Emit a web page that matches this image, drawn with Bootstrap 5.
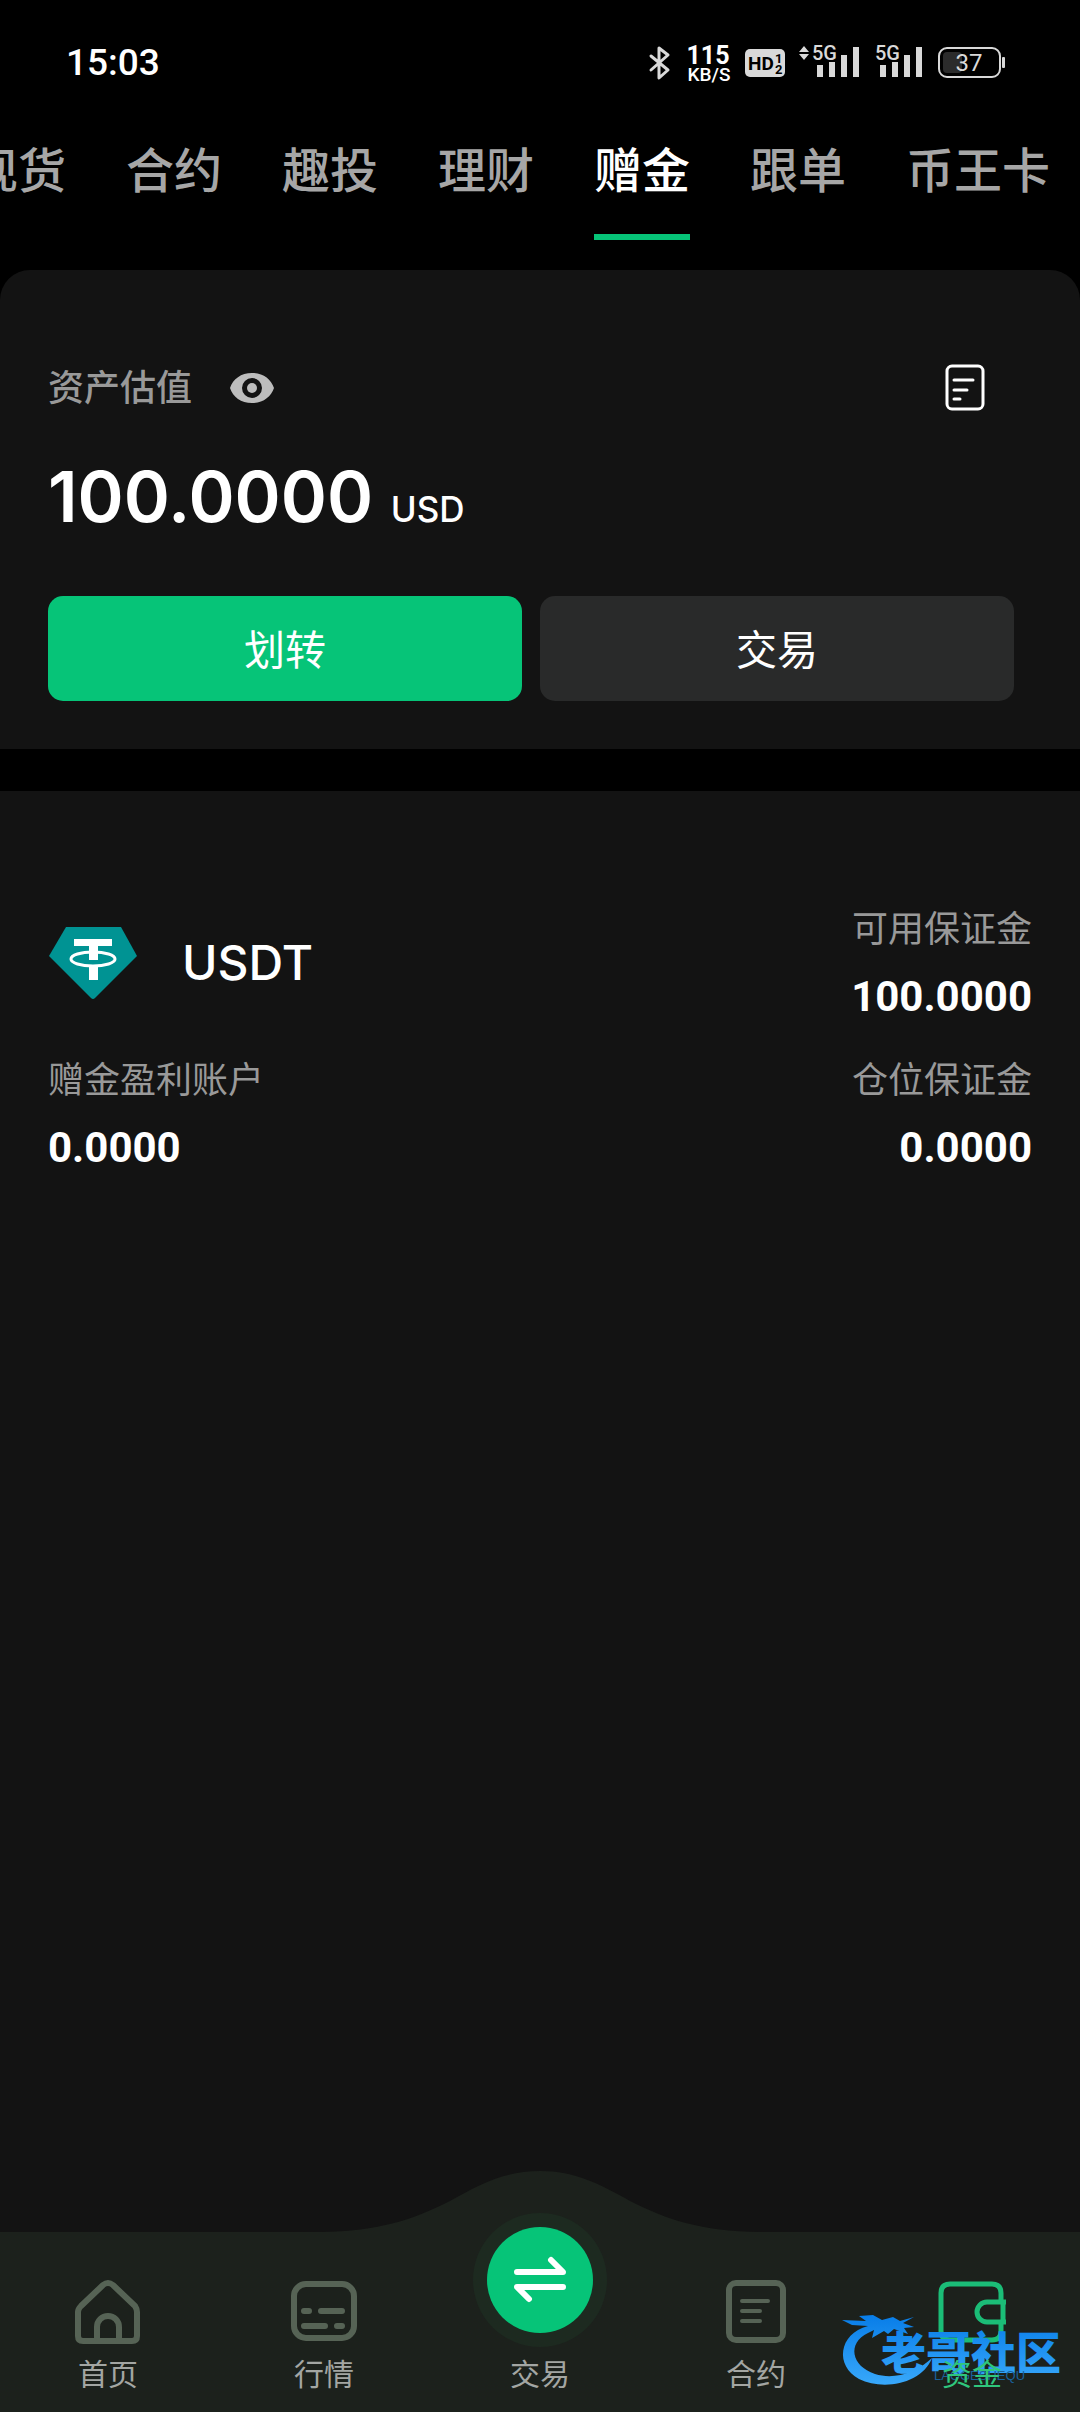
<!DOCTYPE html>
<html lang="zh-CN" data-bs-theme="dark">
<head>
<meta charset="utf-8">
<meta name="viewport" content="width=device-width, initial-scale=1">
<title>资金</title>
<link rel="stylesheet" href="https://cdn.jsdelivr.net/npm/bootstrap@5.3.0/dist/css/bootstrap.min.css">
<style>
:root{--brand:#06c478;--panel:#131313;--bar:#1c211c;--dim:#999}
body{background:#000;color:#fff;font-family:Inter,"Noto Sans CJK SC",sans-serif;line-height:1}
svg{display:block;flex:none}
.status-bar{height:126px;padding:0 75px 0 66px}
.clock{font:500 37px/40px Roboto,sans-serif}
.status-icons text{font-family:Roboto,sans-serif}
.tab-strip{height:144px;gap:60px;margin-left:-30px}
.tab-strip .nav-link{padding:17px 0 0;height:114px;font-size:48px;line-height:56px;font-weight:500;color:#a6a6a6;border-bottom:6px solid transparent;border-radius:0}
.tab-strip .nav-link.active{color:#fff;border-color:var(--brand)}
.panel{background:var(--panel)}
.summary{border-radius:30px 30px 0 0;padding:92px 66px 48px 48px;margin-bottom:42px}
.caption{font-size:36px;line-height:52px;color:var(--dim)}
.icon-btn{background:none;border:0;padding:0;color:#bdbdbd}
.eye-btn{margin-left:38px}
.total{font-size:70px;font-weight:600;line-height:90px;margin:38px 0 42px}
.total small{font-size:35px;font-weight:500}
.btn-row{gap:18px}
.act{height:105px;border-radius:15px;font-size:41px;padding-top:10px;border:0;color:#fff;background:#292a2a}
.act.main{background:var(--brand)}
.asset{padding:112px 48px 0}
.coin{font-size:48px;line-height:56px;font-weight:500;margin-left:44px}
.amount{font:700 42px/50px Roboto,sans-serif;margin-top:17px}
.asset-row{margin-bottom:32px}
.tabbar{background:var(--bar);height:180px}
.hump{left:50%;bottom:100%;transform:translateX(-50%)}
.tabbar a{height:180px;padding-bottom:20px;color:#566355;text-decoration:none}
.tabbar a span{font-size:30px;line-height:36px;color:#a3a6a3}
.tabbar a svg{margin-bottom:8px;overflow:visible}
.tabbar a.active{color:#1bbd77}
.tabbar a.active span{color:#2fc67c;z-index:3;position:relative}
.tabbar a.trade svg{margin-bottom:0}
.stamp{right:0;bottom:18px;z-index:2;pointer-events:none}
</style>
<script src="https://cdn.jsdelivr.net/npm/bootstrap@5.3.0/dist/js/bootstrap.bundle.min.js"></script>
</head>
<body>
<div class="d-flex flex-column min-vh-100 overflow-hidden">
  <header>
    <div class="status-bar d-flex justify-content-between align-items-center">
      <div class="clock">15:03</div>
      <svg class="status-icons" width="360" height="44" viewBox="645 41 360 44" fill="#d9d9d9">
        <path d="M651 56l17 14-9 8V48l9 7-17 15" fill="none" stroke="#d9d9d9" stroke-width="3" stroke-linejoin="round" stroke-linecap="round"/>
        <text x="708" y="64" font-size="25" font-weight="700" fill="#fff" text-anchor="middle">115</text>
        <text x="709" y="81" font-size="19" font-weight="500" fill="#fff" text-anchor="middle">KB/S</text>
        <rect x="745" y="49" width="40" height="28" rx="5"/>
        <text x="748" y="70" font-size="19" font-weight="700" fill="#000">HD</text>
        <text x="775" y="63" font-size="13" font-weight="700" fill="#000">1</text>
        <text x="775" y="74" font-size="13" font-weight="700" fill="#000">2</text>
        <path d="M799 52l5-6 5 6zM799 54h10l-5 6z"/>
        <text x="812" y="60" font-size="20" font-weight="500">5G</text>
        <path d="M817 65h6v12h-6zM829 62h6v15h-6zM841 55h6v22h-6zM853 47h6v30h-6z"/>
        <text x="875" y="60" font-size="20" font-weight="500">5G</text>
        <path d="M880 65h6v12h-6zM892 62h6v15h-6zM904 55h6v22h-6zM916 47h6v30h-6z"/>
        <rect x="939" y="48" width="61" height="29" rx="8" fill="none" stroke="#d9d9d9" stroke-width="2"/>
        <rect x="943" y="52" width="19" height="21" rx="4" fill="#2b2b2b"/>
        <rect x="1002" y="57" width="3" height="11" rx="1"/>
        <text x="969" y="71" font-size="24" text-anchor="middle">37</text>
      </svg>
    </div>
    <nav class="nav tab-strip flex-nowrap text-nowrap">
      <a class="nav-link" href="#">现货</a>
      <a class="nav-link" href="#">合约</a>
      <a class="nav-link" href="#">趣投</a>
      <a class="nav-link" href="#">理财</a>
      <a class="nav-link active" href="#" aria-current="page">赠金</a>
      <a class="nav-link" href="#">跟单</a>
      <a class="nav-link" href="#">币王卡</a>
    </nav>
  </header>

  <main class="flex-grow-1 d-flex flex-column">
    <section class="panel summary">
      <div class="d-flex align-items-center">
        <span class="caption fw-medium">资产估值</span>
        <button class="icon-btn ms-auto order-3 me-4" type="button" aria-label="账单">
          <svg class="me-1" width="42" height="48" viewBox="0 0 42 48" fill="none" stroke="#fff" stroke-width="3" stroke-linecap="round"><rect x="3" y="2" width="36" height="43" rx="5"/><path d="M10 16h19M10 26h13M10 35h6"/></svg>
        </button>
        <button class="icon-btn eye-btn" type="button" aria-label="显示余额">
          <svg width="44" height="30" viewBox="0 0 44 30" fill="currentColor"><path fill-rule="evenodd" d="M22 0C11 0 3 6 0 15c3 9 11 15 22 15s19-6 22-15C41 6 33 0 22 0zm0 25a10 10 0 1 1 0-20 10 10 0 0 1 0 20z"/><circle cx="22" cy="15" r="5"/></svg>
        </button>
      </div>
      <div class="total">100.0000 <small>USD</small></div>
      <div class="btn-row d-flex">
        <button class="btn act main flex-fill w-50" type="button">划转</button>
        <button class="btn act flex-fill w-50" type="button">交易</button>
      </div>
    </section>

    <section class="panel asset flex-grow-1">
      <div class="asset-row d-flex justify-content-between align-items-center">
        <div class="d-flex align-items-center">
          <svg width="90" height="74" viewBox="0 0 90 74"><path d="M18 1h55l16 29-42 42q-2 2-4 0L1 30z" fill="#009393"/><path d="M26 13h38v7H50v14h-9V20H26zM41 41h9v13h-9z" fill="#fff"/><ellipse cx="45" cy="33" rx="22" ry="7" fill="none" stroke="#fff" stroke-width="3"/></svg>
          <span class="coin">USDT</span>
        </div>
        <div class="text-end"><div class="caption">可用保证金</div><div class="amount">100.0000</div></div>
      </div>
      <div class="asset-row d-flex justify-content-between">
        <div><div class="caption">赠金盈利账户</div><div class="amount">0.0000</div></div>
        <div class="text-end"><div class="caption">仓位保证金</div><div class="amount">0.0000</div></div>
      </div>
    </section>
  </main>

  <nav class="tabbar position-relative d-flex">
    <svg class="hump position-absolute" width="440" height="61" viewBox="0 0 440 61"><path d="M0 61C60 60 92 49 130 30C160 13 185 0 220 0S280 13 310 30C348 49 380 60 440 61z" fill="#1c211c"/></svg>
    <a href="#" class="w-100 position-relative d-flex flex-column align-items-center justify-content-end">
      <svg width="66" height="72" viewBox="0 0 66 72" fill="none" stroke="currentColor" stroke-width="6"><path d="M28 9q5-4 10 0L60 30q2 3 2 6v24q0 5-5 5H8q-5 0-5-5V36q0-3 3-6zM22 64V51a11 11 0 0 1 22 0v13"/></svg>
      <span>首页</span>
    </a>
    <a href="#" class="w-100 position-relative d-flex flex-column align-items-center justify-content-end">
      <svg width="68" height="72" viewBox="0 0 68 72" fill="none" stroke="currentColor" stroke-width="6" stroke-linecap="round"><rect x="4" y="8" width="60" height="54" rx="12"/><path d="M14 35h5M31 35h21M14 50h21M47 50h5"/></svg>
      <span>行情</span>
    </a>
    <a href="#" class="trade w-100 position-relative d-flex flex-column align-items-center justify-content-end">
      <svg width="134" height="143" viewBox="0 0 134 143"><circle cx="67" cy="67" r="67" fill="#1d2a20"/><circle cx="67" cy="67" r="53" fill="#06c478"/><path d="M44 59h46L78 47M90 74H44l12 12" fill="none" stroke="#fff" stroke-width="6" stroke-linecap="round" stroke-linejoin="round"/></svg>
      <span>交易</span>
    </a>
    <a href="#" class="w-100 position-relative d-flex flex-column align-items-center justify-content-end">
      <svg width="62" height="72" viewBox="0 0 62 72" fill="none" stroke="currentColor" stroke-width="6"><rect x="4" y="7" width="54" height="57" rx="7"/><path d="M17 25h26M17 35h18M17 45h18" stroke-width="4" stroke-linecap="round"/></svg>
      <span>合约</span>
    </a>
    <a href="#" class="active w-100 d-flex flex-column align-items-center justify-content-end">
      <svg width="70" height="72" viewBox="0 0 70 72" fill="none" stroke="currentColor" stroke-width="5"><path d="M64 25V17q0-9-9-9H13q-9 0-9 9v38q0 9 9 9h42q9 0 9-9v-9M69 26H50a10 10 0 0 0 0 20h19M66 24v24"/></svg>
      <span>资金</span>
    </a>
    <svg class="stamp position-absolute" width="250" height="90" viewBox="830 2304 250 90">
      <defs><linearGradient id="sea" x1="0" y1="0" x2="0" y2="1"><stop offset="0" stop-color="#087de8"/><stop offset="1" stop-color="#38a8fa"/></linearGradient></defs>
      <path fill="url(#sea)" d="M868 2326C838 2334 835 2366 859 2379C883 2391 922 2384 932 2358C916 2373 894 2380 875 2374C851 2366 847 2343 868 2333L874 2330L872 2338L884 2331L888 2334L894 2329L908 2334L904 2328L914 2327L903 2323L914 2317L900 2321L893 2317L882 2320L873 2315L859 2316L866 2321L842 2320L852 2325z"/>
      <text x="881" y="2370" font-family="Noto Sans CJK SC" font-size="45" font-weight="900" fill="url(#sea)">老哥社区</text>
      <text x="934" y="2380" font-family="Liberation Sans" font-size="13" fill="#19629c">LAOGESHEQU</text>
    </svg>
  </nav>
</div>
</body>
</html>
